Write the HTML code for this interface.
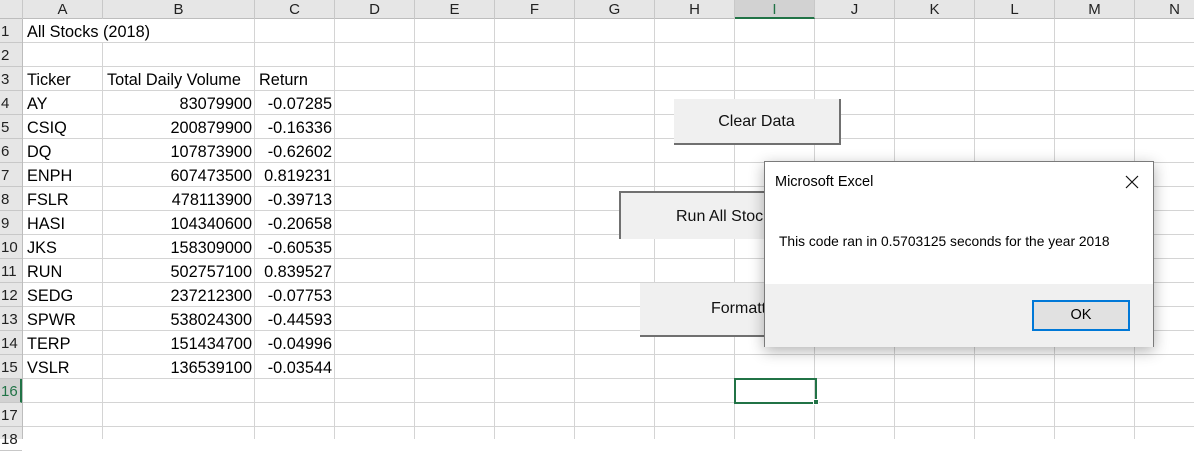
<!DOCTYPE html>
<html><head><meta charset="utf-8"><style>
*{margin:0;padding:0;box-sizing:border-box}
body{width:1194px;height:439px;overflow:hidden;background:#fff;position:relative;font-family:"Liberation Sans",sans-serif;}
.colhdr{position:absolute;top:0;left:0;width:1194px;height:19px;background:#e6e6e6;border-bottom:1px solid #bdbdbd}
.ch{position:absolute;top:0;height:19px;font-size:15px;line-height:19px;text-align:center;color:#222;border-right:1px solid #c8c8c8}
.rowhdr{position:absolute;left:0;top:19px;width:23px;height:420px;background:#e6e6e6;border-right:1px solid #bdbdbd}
.rh{position:absolute;left:0;width:22px;height:24px;font-size:15px;line-height:26px;color:#222;padding-left:1px;border-bottom:1px solid #c8c8c8}
.t{position:absolute;font-size:16.3px;line-height:26px;color:#000;white-space:nowrap}
.r{text-align:right}
.v{position:absolute;top:19px;width:1px;height:420px;background:#d4d4d4}
.btn{position:absolute;background:#f0f0f0;font-size:16px;color:#111;text-align:center}
</style></head><body>
<div style="position:absolute;left:23px;top:19px;width:1171px;height:420px;background-image:linear-gradient(to bottom,transparent 23px,#d4d4d4 23px);background-size:100% 24px"></div>
<div class="v" style="left:102px;top:43px;height:396px"></div>
<div class="v" style="left:254px"></div><div class="v" style="left:334px"></div><div class="v" style="left:414px"></div>
<div class="v" style="left:494px"></div><div class="v" style="left:574px"></div><div class="v" style="left:654px"></div>
<div class="v" style="left:734px"></div><div class="v" style="left:814px"></div><div class="v" style="left:894px"></div>
<div class="v" style="left:974px"></div><div class="v" style="left:1054px"></div><div class="v" style="left:1134px"></div>

<div class="colhdr">
<div style="position:absolute;left:0;top:0;width:23px;height:19px;border-right:1px solid #c8c8c8"></div>
<div class="ch" style="left:23px;width:80px">A</div>
<div class="ch" style="left:103px;width:152px">B</div>
<div class="ch" style="left:255px;width:80px">C</div>
<div class="ch" style="left:335px;width:80px">D</div>
<div class="ch" style="left:415px;width:80px">E</div>
<div class="ch" style="left:495px;width:80px">F</div>
<div class="ch" style="left:575px;width:80px">G</div>
<div class="ch" style="left:655px;width:80px">H</div>
<div class="ch" style="left:735px;width:80px;background:#d2d2d2;border-bottom:2px solid #217346;color:#217346">I</div>
<div class="ch" style="left:815px;width:80px">J</div>
<div class="ch" style="left:895px;width:80px">K</div>
<div class="ch" style="left:975px;width:80px">L</div>
<div class="ch" style="left:1055px;width:80px">M</div>
<div class="ch" style="left:1135px;width:80px">N</div>
</div>

<div class="rowhdr">
<div class="rh" style="top:0">1</div><div class="rh" style="top:24px">2</div><div class="rh" style="top:48px">3</div>
<div class="rh" style="top:72px">4</div><div class="rh" style="top:96px">5</div><div class="rh" style="top:120px">6</div>
<div class="rh" style="top:144px">7</div><div class="rh" style="top:168px">8</div><div class="rh" style="top:192px">9</div>
<div class="rh" style="top:216px">10</div><div class="rh" style="top:240px">11</div><div class="rh" style="top:264px">12</div>
<div class="rh" style="top:288px">13</div><div class="rh" style="top:312px">14</div><div class="rh" style="top:336px">15</div>
<div class="rh" style="top:360px;background:#d2d2d2;color:#217346;border-right:2px solid #217346">16</div>
<div class="rh" style="top:384px">17</div><div class="rh" style="top:408px">18</div>
</div>

<div class="t" style="left:27px;top:19px">All Stocks (2018)</div>
<div class="t" style="left:27px;top:67px">Ticker</div>
<div class="t" style="left:107px;top:67px">Total Daily Volume</div>
<div class="t" style="left:259px;top:67px">Return</div>

<div class="t" style="left:27px;top:91px">AY</div><div class="t r" style="left:103px;width:149px;top:91px">83079900</div><div class="t r" style="left:255px;width:77px;top:91px">-0.07285</div>
<div class="t" style="left:27px;top:115px">CSIQ</div><div class="t r" style="left:103px;width:149px;top:115px">200879900</div><div class="t r" style="left:255px;width:77px;top:115px">-0.16336</div>
<div class="t" style="left:27px;top:139px">DQ</div><div class="t r" style="left:103px;width:149px;top:139px">107873900</div><div class="t r" style="left:255px;width:77px;top:139px">-0.62602</div>
<div class="t" style="left:27px;top:163px">ENPH</div><div class="t r" style="left:103px;width:149px;top:163px">607473500</div><div class="t r" style="left:255px;width:77px;top:163px">0.819231</div>
<div class="t" style="left:27px;top:187px">FSLR</div><div class="t r" style="left:103px;width:149px;top:187px">478113900</div><div class="t r" style="left:255px;width:77px;top:187px">-0.39713</div>
<div class="t" style="left:27px;top:211px">HASI</div><div class="t r" style="left:103px;width:149px;top:211px">104340600</div><div class="t r" style="left:255px;width:77px;top:211px">-0.20658</div>
<div class="t" style="left:27px;top:235px">JKS</div><div class="t r" style="left:103px;width:149px;top:235px">158309000</div><div class="t r" style="left:255px;width:77px;top:235px">-0.60535</div>
<div class="t" style="left:27px;top:259px">RUN</div><div class="t r" style="left:103px;width:149px;top:259px">502757100</div><div class="t r" style="left:255px;width:77px;top:259px">0.839527</div>
<div class="t" style="left:27px;top:283px">SEDG</div><div class="t r" style="left:103px;width:149px;top:283px">237212300</div><div class="t r" style="left:255px;width:77px;top:283px">-0.07753</div>
<div class="t" style="left:27px;top:307px">SPWR</div><div class="t r" style="left:103px;width:149px;top:307px">538024300</div><div class="t r" style="left:255px;width:77px;top:307px">-0.44593</div>
<div class="t" style="left:27px;top:331px">TERP</div><div class="t r" style="left:103px;width:149px;top:331px">151434700</div><div class="t r" style="left:255px;width:77px;top:331px">-0.04996</div>
<div class="t" style="left:27px;top:355px">VSLR</div><div class="t r" style="left:103px;width:149px;top:355px">136539100</div><div class="t r" style="left:255px;width:77px;top:355px">-0.03544</div>

<div style="position:absolute;left:734px;top:378px;width:83px;height:26px;border:2px solid #217346"></div>
<div style="position:absolute;left:813px;top:399px;width:6px;height:6px;background:#217346;border:1px solid #fff"></div>

<div class="btn" style="left:674px;top:99px;width:167px;height:46px;line-height:46px;border-right:2px solid #707070;border-bottom:2px solid #707070">Clear Data</div>
<div class="btn" style="left:619px;top:191px;width:200px;height:48px;line-height:48px;border-left:2px solid #707070;border-top:2px solid #707070;text-align:left;padding-left:55px">Run All Stocks</div>
<div class="btn" style="left:640px;top:283px;width:200px;height:54px;line-height:52px;border-bottom:2px solid #707070;text-align:left;padding-left:71px">Formatting</div>

<div style="position:absolute;left:764px;top:161px;width:390px;height:186px;background:#fff;border:1px solid #7a7a7a;box-shadow:0 4px 14px rgba(0,0,0,0.3);color:#000">
<div style="position:absolute;left:10px;top:12px;font-size:14.5px">Microsoft Excel</div>
<svg style="position:absolute;left:360px;top:13px" width="14" height="14" viewBox="0 0 14 14"><path d="M1 1L13 13M13 1L1 13" stroke="#111" stroke-width="1.2"/></svg>
<div style="position:absolute;left:14px;top:72px;font-size:13.8px">This code ran in 0.5703125 seconds for the year 2018</div>
<div style="position:absolute;left:0;top:122px;width:388px;height:63px;background:#f0f0f0">
<div style="position:absolute;left:267px;top:16px;width:98px;height:31px;background:#e1e1e1;border:2px solid #0078d7;text-align:center;line-height:27px;font-size:14.5px">OK</div>
</div>
</div>
</body></html>
